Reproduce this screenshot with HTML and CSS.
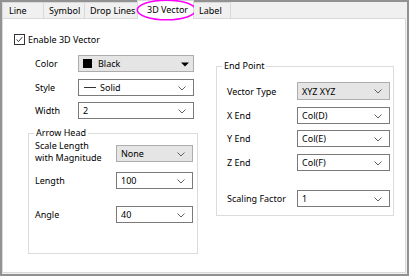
FILE: index.html
```html
<!DOCTYPE html>
<html>
<head>
<meta charset="utf-8">
<link rel="stylesheet" href="styles.css">
</head>
<body>
<div class="window">
  <div class="tabs">
    <div class="tab t-line">Line</div>
    <div class="tab t-symbol">Symbol</div>
    <div class="tab t-drop">Drop Lines</div>
    <div class="tab t-vec active">3D Vector
      <svg class="ring" width="61" height="22" viewBox="0 0 61 22"><ellipse cx="30.5" cy="11" rx="29.2" ry="9.8" fill="none" stroke="#ff00ff" stroke-width="1.6"/></svg>
    </div>
    <div class="tab t-label">Label</div>
  </div>
  <div class="panel">
    <div class="check-row">
      <span class="checkbox"><svg width="11" height="11" viewBox="0 0 11 11"><polyline points="2,5.5 4.3,8 9,2.5" fill="none" stroke="#222" stroke-width="1.1"/></svg></span>
      <span>Enable 3D Vector</span>
    </div>
    <div class="columns">
      <div class="col-left">
        <div class="row">
          <span class="lbl lbl-main">Color</span>
          <div class="combo gray w-main">
            <span class="swatch"></span><span>Black</span>
            <svg class="tri" width="8" height="5" viewBox="0 0 8 5"><polygon points="0,0.5 8,0.5 4,4.5" fill="#000"/></svg>
          </div>
        </div>
        <div class="row">
          <span class="lbl lbl-main">Style</span>
          <div class="combo w-main">
            <span class="dash"></span><span>Solid</span>
            <svg class="chev" width="8" height="5" viewBox="0 0 8 5"><polyline points="0.5,0.5 4,4 7.5,0.5" fill="none" stroke="#606060" stroke-width="1"/></svg>
          </div>
        </div>
        <div class="row">
          <span class="lbl lbl-main">Width</span>
          <div class="combo w-main">
            <span>2</span>
            <svg class="chev" width="8" height="5" viewBox="0 0 8 5"><polyline points="0.5,0.5 4,4 7.5,0.5" fill="none" stroke="#606060" stroke-width="1"/></svg>
          </div>
        </div>
        <fieldset class="group arrow">
          <legend>Arrow Head</legend>
          <div class="group-body arrow-body">
            <div class="row row-top">
              <span class="lbl lbl-arrow two-line">Scale Length<br>with Magnitude</span>
              <div class="combo gray w-arrow combo-low">
                <span>None</span>
                <svg class="chev" width="8" height="5" viewBox="0 0 8 5"><polyline points="0.5,0.5 4,4 7.5,0.5" fill="none" stroke="#606060" stroke-width="1"/></svg>
              </div>
            </div>
            <div class="row gap-length">
              <span class="lbl lbl-arrow">Length</span>
              <div class="combo w-arrow">
                <span>100</span>
                <svg class="chev" width="8" height="5" viewBox="0 0 8 5"><polyline points="0.5,0.5 4,4 7.5,0.5" fill="none" stroke="#606060" stroke-width="1"/></svg>
              </div>
            </div>
            <div class="row gap-angle">
              <span class="lbl lbl-arrow">Angle</span>
              <div class="combo w-arrow">
                <span>40</span>
                <svg class="chev" width="8" height="5" viewBox="0 0 8 5"><polyline points="0.5,0.5 4,4 7.5,0.5" fill="none" stroke="#606060" stroke-width="1"/></svg>
              </div>
            </div>
          </div>
        </fieldset>
      </div>
      <div class="col-right">
        <fieldset class="group end">
          <legend>End Point</legend>
          <div class="group-body end-body">
            <div class="row">
              <span class="lbl lbl-end">Vector Type</span>
              <div class="combo gray w-end combo-tall">
                <span>XYZ XYZ</span>
                <svg class="chev" width="8" height="5" viewBox="0 0 8 5"><polyline points="0.5,0.5 4,4 7.5,0.5" fill="none" stroke="#606060" stroke-width="1"/></svg>
              </div>
            </div>
            <div class="row">
              <span class="lbl lbl-end">X End</span>
              <div class="combo w-end">
                <span>Col(D)</span>
                <svg class="chev" width="8" height="5" viewBox="0 0 8 5"><polyline points="0.5,0.5 4,4 7.5,0.5" fill="none" stroke="#606060" stroke-width="1"/></svg>
              </div>
            </div>
            <div class="row">
              <span class="lbl lbl-end">Y End</span>
              <div class="combo w-end">
                <span>Col(E)</span>
                <svg class="chev" width="8" height="5" viewBox="0 0 8 5"><polyline points="0.5,0.5 4,4 7.5,0.5" fill="none" stroke="#606060" stroke-width="1"/></svg>
              </div>
            </div>
            <div class="row">
              <span class="lbl lbl-end">Z End</span>
              <div class="combo w-end">
                <span>Col(F)</span>
                <svg class="chev" width="8" height="5" viewBox="0 0 8 5"><polyline points="0.5,0.5 4,4 7.5,0.5" fill="none" stroke="#606060" stroke-width="1"/></svg>
              </div>
            </div>
            <div class="row gap-scaling">
              <span class="lbl lbl-end">Scaling Factor</span>
              <div class="combo w-end">
                <span>1</span>
                <svg class="chev" width="8" height="5" viewBox="0 0 8 5"><polyline points="0.5,0.5 4,4 7.5,0.5" fill="none" stroke="#606060" stroke-width="1"/></svg>
              </div>
            </div>
          </div>
        </fieldset>
      </div>
    </div>
  </div>
</div>
</body>
</html>
```

FILE: styles.css
```css
html, body {
  margin: 0;
  padding: 0;
  background: #ffffff;
}

body {
  font-family: "Noto Sans", "DejaVu Sans", sans-serif;
  font-size: 9px;
  color: #000;
}

.window {
  width: 409px;
  height: 276px;
  box-sizing: border-box;
  border: 2px solid #929292;
  background: #f0f0f0;
  display: flex;
  flex-direction: column;
}

.tabs {
  height: 16px;
  display: flex;
  align-items: flex-end;
  position: relative;
  z-index: 2;
}

.tab {
  box-sizing: border-box;
  height: 16px;
  line-height: 15px;
  padding-left: 5px;
  border: 1px solid #d9d9d9;
  border-bottom: none;
  border-left: none;
  background: #f0f0f0;
  white-space: nowrap;
  position: relative;
}

.t-line { width: 42px; border-left: 1px solid #d9d9d9; padding-left: 6px; }
.t-symbol { width: 41px; }
.t-drop { width: 53px; overflow: visible; }
.t-vec { width: 57px; }
.t-label { width: 37px; }

.tab.active {
  background: #ffffff;
  height: 19px;
  margin-bottom: -1px;
  line-height: 17px;
  padding-left: 9px;
  border-left: 1px solid #d9d9d9;
  margin-left: -1px;
}

.ring {
  position: absolute;
  left: -2px;
  top: -2px;
  overflow: visible;
}

.panel {
  flex: 1;
  margin: 0 1px 1px 0;
  background: #ffffff;
  border: 1px solid #d9d9d9;
  box-sizing: border-box;
  padding: 14px 0 0 11px;
}

.check-row {
  display: flex;
  align-items: center;
  height: 13px;
}

.checkbox {
  width: 11px;
  height: 11px;
  box-sizing: border-box;
  border: 1px solid #333;
  margin-right: 3px;
  display: flex;
  align-items: center;
  justify-content: center;
}

.checkbox svg {
  display: block;
}

.columns {
  display: flex;
  gap: 18px;
  margin-top: 9px;
  padding-left: 14px;
}

.col-left {
  width: 170px;
  display: flex;
  flex-direction: column;
}

.col-right {
  width: 178px;
  padding-top: 5px;
}

.row {
  display: flex;
  align-items: center;
  margin-bottom: 6.5px;
}

.col-left > .row {
  padding-left: 7px;
}

.lbl {
  white-space: nowrap;
  flex-shrink: 0;
}

.lbl-main { width: 43px; }
.lbl-arrow { width: 81px; }
.lbl-end { width: 70px; }

.combo {
  box-sizing: border-box;
  height: 17px;
  border: 1px solid #7a7a7a;
  background: #ffffff;
  display: flex;
  align-items: center;
  padding-left: 4px;
  position: relative;
}

.combo.gray {
  background: #e5e5e5;
  border-color: #adadad;
}

.combo-tall {
  height: 18px;
}

.w-main { width: 116px; }
.w-arrow { width: 77px; }
.w-end { width: 93px; }

.chev {
  position: absolute;
  right: 7px;
  top: 6px;
}

.tri {
  position: absolute;
  right: 4px;
  top: 6px;
}

.swatch {
  width: 9px;
  height: 9px;
  background: #000;
  margin-right: 6px;
}

.dash {
  width: 12px;
  height: 1px;
  background: #333;
  margin-left: 1px;
  margin-right: 4px;
}

.group {
  margin: 0;
  padding: 0;
  border: 1px solid #dcdcdc;
  min-width: 0;
}

.group legend {
  padding: 0 2px;
  margin-left: 5px;
  line-height: 12px;
  height: 12px;
}

.arrow {
  margin-top: 1.5px;
  width: 170px;
  box-sizing: border-box;
}

.group-body {
  box-sizing: border-box;
}

.arrow-body {
  height: 114px;
  padding-left: 6px;
  padding-top: 1px;
}

.row-top {
  align-items: flex-start;
  margin-bottom: 8px;
}

.two-line {
  line-height: 12px;
}

.combo-low {
  margin-top: 5px;
}

.gap-length {
  margin-bottom: 17px;
}

.end {
  width: 178px;
  box-sizing: border-box;
}

.end-body {
  padding: 10px 0 8px 10px;
}

.end-body .row:last-child {
  margin-bottom: 0;
}

.gap-scaling {
  margin-top: 19px;
}
```
